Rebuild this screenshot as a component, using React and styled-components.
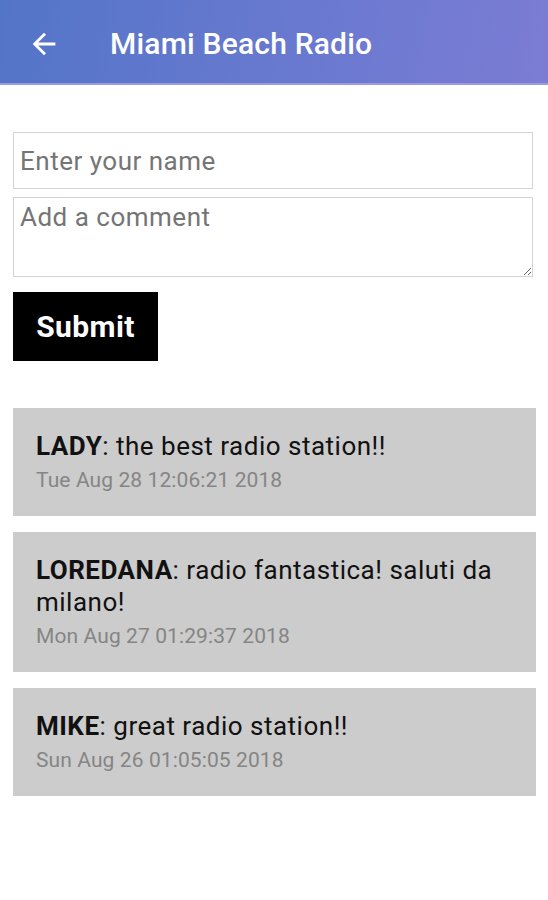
import styled, { createGlobalStyle } from "styled-components";

const comments = [
  { name: "LADY", text: "the best radio station!!", date: "Tue Aug 28 12:06:21 2018" },
  { name: "LOREDANA", text: "radio fantastica! saluti da milano!", date: "Mon Aug 27 01:29:37 2018" },
  { name: "MIKE", text: "great radio station!!", date: "Sun Aug 26 01:05:05 2018" },
];

export default function App() {
  return (
    <>
      <GlobalStyle />
      <SCHeader>
        <SCBackButton aria-label="back">
          <svg width="34" height="34" viewBox="0 0 24 24" fill="#ffffff">
            <path d="M20 11H7.83l5.59-5.59L12 4l-8 8 8 8 1.41-1.41L7.83 13H20v-2z" />
          </svg>
        </SCBackButton>
        <SCTitle>Miami Beach Radio</SCTitle>
      </SCHeader>
      <SCContent>
        <SCForm onSubmit={(e) => e.preventDefault()}>
          <SCNameInput placeholder="Enter your name" />
          <SCCommentInput placeholder="Add a comment" />
          <SCSubmit type="submit">Submit</SCSubmit>
        </SCForm>
        <SCList>
          {comments.map((c) => (
            <SCCard key={c.date}>
              <SCMessage>
                <b>{c.name}</b>: {c.text}
              </SCMessage>
              <SCDate>{c.date}</SCDate>
            </SCCard>
          ))}
        </SCList>
      </SCContent>
    </>
  );
}

const GlobalStyle = createGlobalStyle`
  body {
    margin: 0;
    background: #ffffff;
    font-family: Roboto, "Liberation Sans", sans-serif;
  }
`;

const SCHeader = styled.header`
  height: 85px;
  display: flex;
  align-items: center;
  background: linear-gradient(100deg, #5375c8 0%, #6779cf 50%, #7c7cd4 100%);
  border-bottom: 2px solid #9a9be0;
  box-sizing: border-box;
  padding-left: 27px;
  padding-top: 4px;
`;

const SCBackButton = styled.button`
  background: none;
  border: none;
  padding: 0;
  display: flex;
  width: 34px;
  height: 34px;
  margin-right: 49px;
`;

const SCTitle = styled.h1`
  margin: 0;
  color: #ffffff;
  font-family: Roboto, sans-serif;
  font-weight: 500;
  font-size: 30px;
  letter-spacing: 0.2px;
`;

const SCContent = styled.main`
  padding: 47px 13px 40px 13px;
`;

const SCForm = styled.form`
  display: flex;
  flex-direction: column;
  align-items: flex-start;
`;

const fieldStyle = `
  width: 520px;
  box-sizing: border-box;
  border: 1px solid #cfd3e2;
  border-radius: 0;
  font-family: Roboto, sans-serif;
  font-size: 26px;
  letter-spacing: 0.5px;
  color: #333;
  padding: 0 6px;
  outline: none;
  &::placeholder {
    color: #757575;
  }
`;

const SCNameInput = styled.input`
  ${fieldStyle}
  height: 57px;
`;

const SCCommentInput = styled.textarea`
  ${fieldStyle}
  height: 80px;
  margin-top: 8px;
  padding-top: 3px;
  line-height: 32px;
  resize: vertical;
`;

const SCSubmit = styled.button`
  margin-top: 15px;
  width: 145px;
  height: 69px;
  background: #000000;
  color: #ffffff;
  border: none;
  font-family: Roboto, sans-serif;
  font-weight: 700;
  font-size: 30px;
  letter-spacing: 0.4px;
  padding: 0;
`;

const SCList = styled.div`
  margin-top: 47px;
  display: flex;
  flex-direction: column;
  gap: 16px;
  width: 523px;
`;

const SCCard = styled.div`
  background: #cccccc;
  padding: 22px 20px 22px 23px;
`;

const SCMessage = styled.div`
  font-family: Roboto, sans-serif;
  font-size: 26px;
  letter-spacing: 0.5px;
  line-height: 32px;
  color: #111111;
  b {
    font-weight: 700;
  }
`;

const SCDate = styled.div`
  margin-top: 4px;
  font-family: Roboto, sans-serif;
  font-size: 21px;
  letter-spacing: 0.1px;
  line-height: 28px;
  color: #858585;
`;
